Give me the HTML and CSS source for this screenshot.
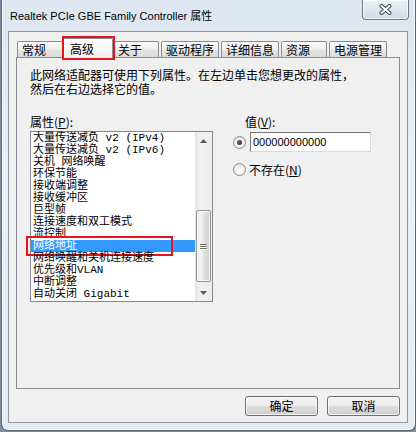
FILE: index.html
```html
<!DOCTYPE html>
<html lang="zh-CN">
<head>
<meta charset="utf-8">
<title>Realtek PCIe GBE Family Controller 属性</title>
<link rel="stylesheet" href="styles.css">
</head>
<body>
<div class="window">
  <div class="titlebar">
    <span class="title">Realtek PCIe GBE Family Controller 属性</span>
    <div class="close">
      <svg width="13" height="11" viewBox="0 0 13 11">
        <path d="M2.5 2 L10.5 9 M10.5 2 L2.5 9" stroke="#3d4654" stroke-width="4" stroke-linecap="round" fill="none"/>
        <path d="M2.5 2 L10.5 9 M10.5 2 L2.5 9" stroke="#ffffff" stroke-width="2" stroke-linecap="round" fill="none"/>
      </svg>
    </div>
  </div>
  <div class="client">
    <div class="tabs">
      <div class="tab">常规</div>
      <div class="tab selected">高级<span class="tab-mark"></span></div>
      <div class="tab">关于</div>
      <div class="tab">驱动程序</div>
      <div class="tab">详细信息</div>
      <div class="tab">资源</div>
      <div class="tab">电源管理</div>
    </div>
    <div class="page">
      <div class="desc">
        <div class="desc-line">此网络适配器可使用下列属性。在左边单击您想更改的属性，</div>
        <div class="desc-line">然后在右边选择它的值。</div>
      </div>
      <div class="cols">
        <div class="left">
          <div class="label">属性(<u>P</u>):</div>
          <div class="listbox">
            <ul class="items">
              <li>大量传送减负 v2 (IPv4)</li>
              <li>大量传送减负 v2 (IPv6)</li>
              <li>关机 网络唤醒</li>
              <li>环保节能</li>
              <li>接收端调整</li>
              <li>接收缓冲区</li>
              <li>巨型帧</li>
              <li>连接速度和双工模式</li>
              <li>流控制</li>
              <li class="sel">网络地址<span class="item-mark"></span></li>
              <li>网络唤醒和关机连接速度</li>
              <li>优先级和VLAN</li>
              <li>中断调整</li>
              <li>自动关闭 Gigabit</li>
            </ul>
            <div class="scroll">
              <div class="sbtn">
                <svg width="7" height="4" viewBox="0 0 7 4"><path d="M0 4 L3.5 0 L7 4 Z" fill="#5a5a5a"/></svg>
              </div>
              <div class="track"></div>
              <div class="thumb">
                <span class="grip"></span><span class="grip"></span><span class="grip"></span>
              </div>
              <div class="sbtn">
                <svg width="7" height="4" viewBox="0 0 7 4"><path d="M0 0 L7 0 L3.5 4 Z" fill="#5a5a5a"/></svg>
              </div>
            </div>
          </div>
        </div>
        <div class="right">
          <div class="label value-label">值(<u>V</u>):</div>
          <div class="opt opt-first">
            <span class="radio on"></span>
            <div class="textbox">000000000000</div>
          </div>
          <div class="opt opt-second">
            <span class="radio"></span>
            <span class="opt-text">不存在(<u>N</u>)</span>
          </div>
        </div>
      </div>
    </div>
    <div class="buttons">
      <button class="btn">确定</button>
      <button class="btn">取消</button>
    </div>
  </div>
</div>
</body>
</html>
```

FILE: styles.css
```css
html, body {
  margin: 0;
  padding: 0;
}
body {
  width: 416px;
  height: 432px;
  overflow: hidden;
  background: #7d8ea6;
  font-family: "Noto Sans CJK SC", "Liberation Sans", sans-serif;
  color: #000;
}
.window {
  margin-left: 1px;
  width: 415px;
  height: 431px;
  box-sizing: border-box;
  border: 1px solid #5d6470;
  border-top: 0;
  border-radius: 0 0 7px 7px;
  background: linear-gradient(180deg, #dde6f1 0%, #e9eff7 40%, #e4ebf4 100%);
  box-shadow: inset 1px 0 0 rgba(255,255,255,0.8), inset -1px -1px 0 rgba(255,255,255,0.8);
  display: flex;
  flex-direction: column;
}
.titlebar {
  height: 31px;
  flex: none;
  display: flex;
  align-items: center;
  padding-left: 8px;
}
.title {
  font-family: "Liberation Sans", "Noto Sans CJK SC", sans-serif;
  font-size: 11px;
  line-height: 14px;
  color: #000;
  white-space: nowrap;
}
.close {
  align-self: flex-start;
  margin-left: auto;
  margin-right: 6px;
  width: 47px;
  height: 20px;
  box-sizing: border-box;
  border: 1px solid #6f7887;
  border-top: 0;
  border-radius: 0 0 4px 4px;
  background: linear-gradient(180deg, #eef2f8 0%, #dfe6ef 50%, #d3dce8 100%);
  box-shadow: inset 0 0 0 1px rgba(255,255,255,0.7);
  display: flex;
  align-items: center;
  justify-content: center;
}
.close svg {
  display: block;
}
.client {
  flex: 1;
  margin: 0 7px 7px 6px;
  border: 1px solid #8e96a2;
  background: #f0f0f0;
  padding: 6px 7px;
  display: flex;
  flex-direction: column;
  min-height: 0;
}
.tabs {
  flex: none;
  height: 19px;
  display: flex;
  align-items: flex-end;
  gap: 2px;
  padding-left: 1px;
}
.tab {
  height: 16px;
  min-width: 46px;
  box-sizing: border-box;
  padding: 0 4px;
  border: 1px solid #898c95;
  border-bottom: 0;
  border-radius: 2px 2px 0 0;
  background: linear-gradient(180deg, #fbfbfb 0%, #eeeeee 50%, #e4e4e4 51%, #dcdcdc 100%);
  font-size: 12px;
  line-height: 15px;
  white-space: nowrap;
}
.tab.selected {
  position: relative;
  z-index: 1;
  height: 20px;
  min-width: 50px;
  margin: 0 -2px -1px;
  padding: 0 6px;
  line-height: 19px;
  background: linear-gradient(180deg, #ffffff 0%, #f7f7f7 60%, #f0f0f0 100%);
}
.tab-mark {
  position: absolute;
  left: -2px;
  top: -3px;
  right: -3px;
  bottom: -2px;
  border: 2px solid #e8141b;
}
.page {
  flex: 1;
  border: 1px solid #898c95;
  background: #f0f0f0;
  padding: 11px 13px 0;
}
.desc {
  font-family: "Liberation Sans", "Noto Sans CJK SC", sans-serif;
  font-size: 12px;
}
.desc-line {
  height: 14px;
  line-height: 14px;
  white-space: nowrap;
}
.cols {
  display: flex;
  gap: 20px;
  margin-top: 18px;
}
.left {
  width: 183px;
}
.label {
  font-size: 12px;
  line-height: 13px;
  height: 13px;
  white-space: nowrap;
}
.listbox {
  margin-top: 3px;
  width: 183px;
  height: 171px;
  box-sizing: border-box;
  border: 1px solid #828790;
  background: #fff;
  display: flex;
}
.items {
  list-style: none;
  margin: 0;
  padding: 0;
  flex: 1;
  font-family: "Liberation Mono", "Noto Sans CJK SC", monospace;
  font-size: 11px;
}
.items li {
  position: relative;
  height: 12px;
  line-height: 13px;
  padding-left: 2px;
  white-space: nowrap;
}
.items li.sel {
  background: #3399ff;
  color: #fff;
}
.item-mark {
  position: absolute;
  left: -5px;
  top: -4px;
  width: 147px;
  height: 20px;
  box-sizing: border-box;
  border: 2px solid #e8141b;
}
.scroll {
  width: 17px;
  display: flex;
  flex-direction: column;
  background: linear-gradient(90deg, #e4e4e4 0%, #f2f2f2 30%, #eeeeee 100%);
}
.sbtn {
  height: 17px;
  flex: none;
  display: flex;
  align-items: center;
  justify-content: center;
}
.sbtn svg {
  display: block;
}
.track {
  flex: 1;
}
.thumb {
  flex: none;
  height: 72px;
  margin: 0 1px 2px;
  box-sizing: border-box;
  border: 1px solid #969696;
  border-radius: 2px;
  background: linear-gradient(90deg, #f7f7f7 0%, #ececec 45%, #dedede 55%, #d2d2d2 100%);
  box-shadow: inset 0 0 0 1px rgba(255,255,255,0.6);
  display: flex;
  flex-direction: column;
  align-items: center;
  justify-content: center;
  gap: 1px;
}
.grip {
  display: block;
  width: 7px;
  height: 1px;
  background: #6f6f6f;
  box-shadow: 0 1px 0 #ffffff;
}
.right {
  display: flex;
  flex-direction: column;
}
.value-label {
  margin-left: 12px;
}
.opt {
  display: flex;
  align-items: center;
}
.opt-first {
  margin-top: 4px;
  gap: 4px;
}
.opt-second {
  margin-top: 11px;
  gap: 3px;
}
.radio {
  width: 13px;
  height: 13px;
  box-sizing: border-box;
  border: 1px solid #8b8b8b;
  border-radius: 50%;
  background: radial-gradient(circle at 50% 60%, #ffffff 0%, #f0f0f0 50%, #d8d8d8 100%);
  display: flex;
  align-items: center;
  justify-content: center;
}
.radio.on::after {
  content: "";
  width: 5px;
  height: 5px;
  border-radius: 50%;
  background: radial-gradient(circle at 40% 40%, #6a6a6a 0%, #1a1a1a 100%);
}
.textbox {
  width: 121px;
  height: 20px;
  box-sizing: border-box;
  border: 1px solid;
  border-color: #7a7a7a #dadada #dadada #7a7a7a;
  background: #fff;
  padding-left: 2px;
  font-family: "Liberation Sans", sans-serif;
  font-size: 11px;
  line-height: 18px;
}
.opt-text {
  font-size: 12px;
  line-height: 13px;
  white-space: nowrap;
}
.buttons {
  flex: none;
  display: flex;
  justify-content: flex-end;
  gap: 9px;
  margin-top: 7px;
}
.btn {
  width: 73px;
  height: 20px;
  box-sizing: border-box;
  padding: 0;
  border: 1px solid #707070;
  border-radius: 3px;
  background: linear-gradient(180deg, #f4f4f4 0%, #ebebeb 50%, #dddddd 51%, #cfcfcf 100%);
  box-shadow: inset 0 0 0 1px rgba(255,255,255,0.7);
  font-family: "Noto Sans CJK SC", sans-serif;
  font-size: 12px;
  line-height: 18px;
  color: #000;
}
```
